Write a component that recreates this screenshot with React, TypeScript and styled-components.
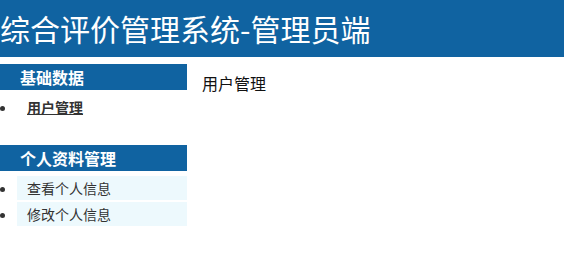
import React from 'react';
import styled, { createGlobalStyle } from 'styled-components';

const GlobalStyle = createGlobalStyle`
    html, body {
        margin: 0;
        padding: 0;
        background: #fff;
        font-family: "Noto Sans CJK SC", "Noto Sans", sans-serif;
    }
`;

const BLUE = '#1063a1';

interface NavSection {
    title: string;
    items: { label: string; active?: boolean }[];
}

const sections: NavSection[] = [
    { title: '基础数据', items: [{ label: '用户管理', active: true }] },
    { title: '个人资料管理', items: [{ label: '查看个人信息' }, { label: '修改个人信息' }] },
];

export default function App() {
    return (
        <>
            <GlobalStyle />
            <Header>综合评价管理系统-管理员端</Header>
            <Body>
                <Sidebar>
                    {sections.map((section) => (
                        <Section key={section.title}>
                            <SectionTitle>{section.title}</SectionTitle>
                            <List>
                                {section.items.map((item) => (
                                    <Item key={item.label} $active={item.active}>
                                        <ItemLink href="#" $active={item.active}>
                                            {item.label}
                                        </ItemLink>
                                    </Item>
                                ))}
                            </List>
                        </Section>
                    ))}
                </Sidebar>
                <Main>用户管理</Main>
            </Body>
        </>
    );
}

const Header = styled.header`
    height: 57px;
    background-color: ${BLUE};
    color: #fff;
    font-size: 30px;
    line-height: 57px;
    white-space: nowrap;
`;

const Body = styled.div`
    display: flex;
    margin-top: 7px;
`;

const Sidebar = styled.nav`
    width: 187px;
    flex-shrink: 0;
`;

const Section = styled.div`
    margin-bottom: 26px;
`;

const SectionTitle = styled.div`
    height: 26px;
    line-height: 26px;
    padding-left: 20px;
    background-color: ${BLUE};
    color: #fff;
    font-size: 16px;
    font-weight: bold;
`;

const List = styled.ul`
    margin: 5px 0 0;
    padding-left: 17px;
    list-style: disc;
    color: #333;
`;

const Item = styled.li<{ $active?: boolean }>`
    height: 24px;
    line-height: 24px;
    margin-bottom: 2px;
    padding-left: 10px;
    font-size: 14px;
    background-color: ${(p) => (p.$active ? 'transparent' : '#edf9fd')};
`;

const ItemLink = styled.a<{ $active?: boolean }>`
    color: #333;
    font-weight: ${(p) => (p.$active ? 'bold' : 'normal')};
    text-decoration: ${(p) => (p.$active ? 'underline' : 'none')};
`;

const Main = styled.main`
    flex: 1;
    padding: 7px 0 0 15px;
    font-size: 16px;
    color: #111;
`;
